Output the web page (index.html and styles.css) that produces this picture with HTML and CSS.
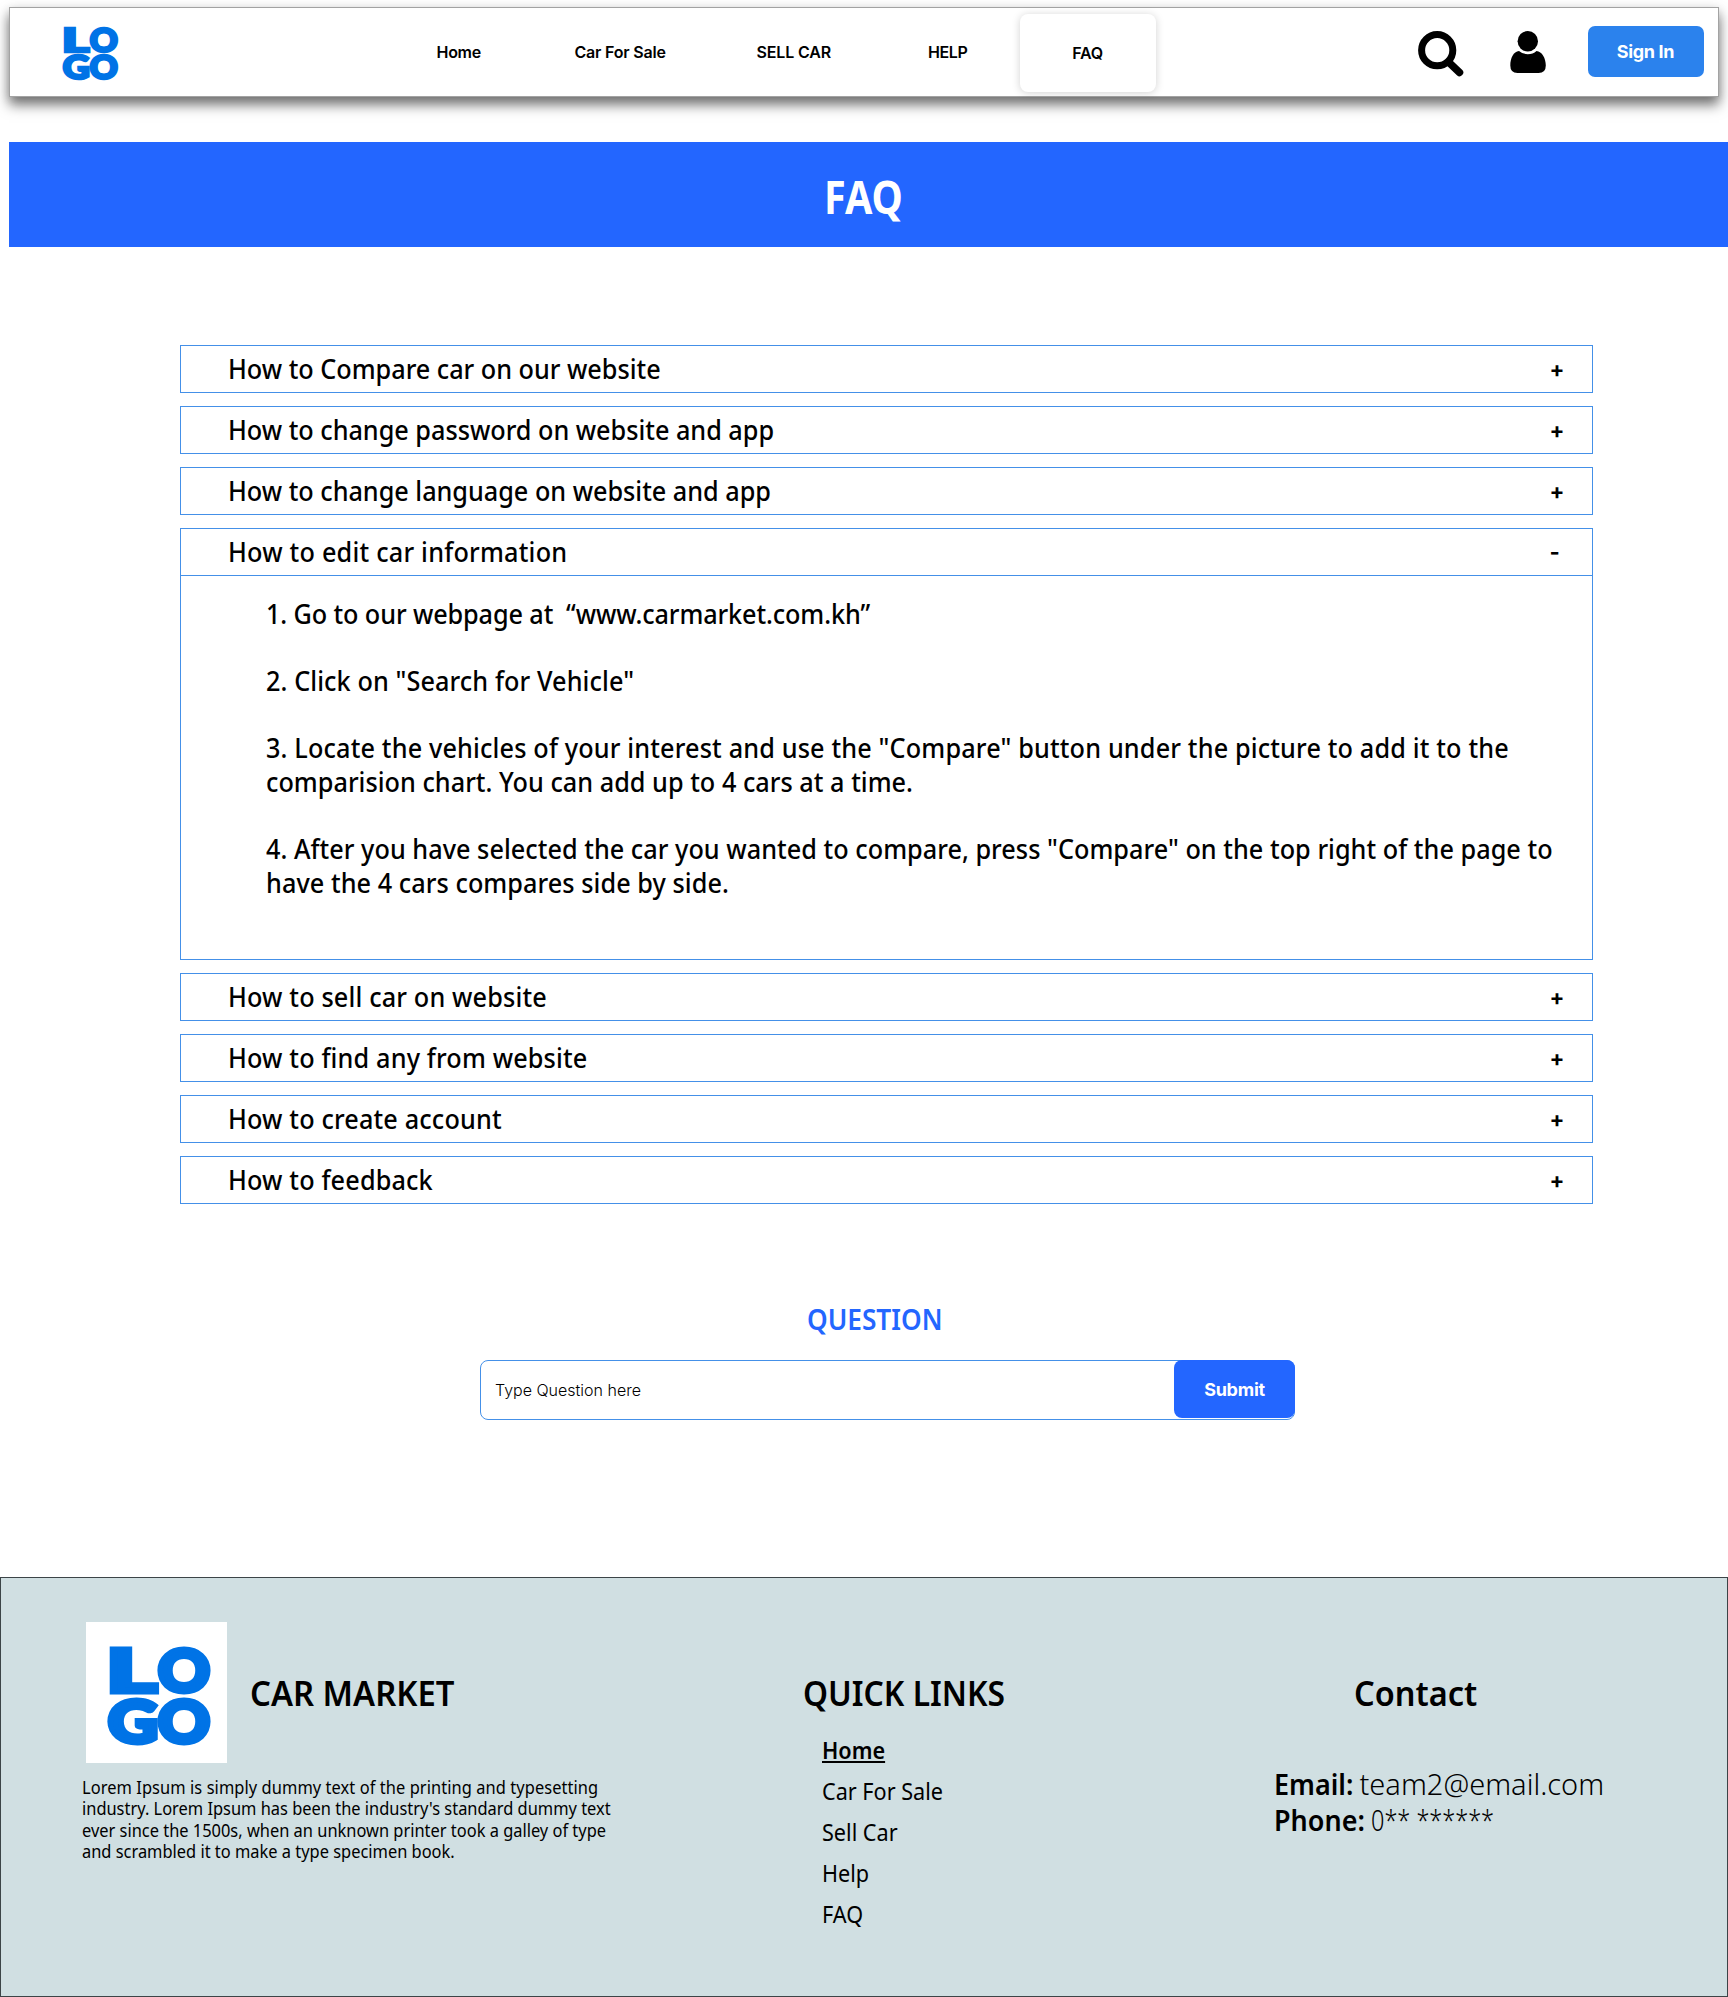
FILE: index.html
```
<!DOCTYPE html>
<html lang="en">
<head>
<meta charset="utf-8">
<title>Car Market - FAQ</title>
<link rel="stylesheet" href="styles.css">
</head>
<body>
<header class="topbar">
  <svg class="topbar-logo" viewBox="0 0 141 141" role="img" aria-label="Logo">
    <g class="logo-letters">
      <text x="20.500" y="70" textLength="50" lengthAdjust="spacingAndGlyphs">L</text>
      <text x="72" y="70" textLength="52" lengthAdjust="spacingAndGlyphs">O</text>
      <text x="22" y="121" textLength="50" lengthAdjust="spacingAndGlyphs">G</text>
      <text x="72" y="121" textLength="52" lengthAdjust="spacingAndGlyphs">O</text>
    </g>
  </svg>
  <nav class="nav">
    <a class="nav-link nav-home">Home</a>
    <a class="nav-link nav-sale">Car For Sale</a>
    <a class="nav-link nav-sell">SELL CAR</a>
    <a class="nav-link nav-help">HELP</a>
    <a class="nav-link nav-active">FAQ</a>
  </nav>
  <div class="actions">
    <svg class="icon-search" viewBox="0 0 46 46"><circle cx="19.2" cy="19.2" r="15.6" fill="none" stroke="#000" stroke-width="7"/><path d="M31 31.5L41.5 41.5" stroke="#000" stroke-width="7.5" stroke-linecap="round"/></svg>
    <svg class="icon-user" viewBox="0 0 36 42"><circle cx="17.8" cy="10.2" r="10.2"/><path d="M9 20Q12.500 23.200 17.800 23.200Q23 23.200 26.500 20C32 20.500 35.800 27 35.800 34.500Q35.800 42 28.500 42H7.500Q.3 42 .3 34.500C.3 27 3.500 20.500 9 20Z"/></svg>
    <button class="signin">Sign In</button>
  </div>
</header>

<h1 class="banner"><span>FAQ</span></h1>

<main>
  <section class="faq">
    <article class="item"><h2>How to Compare car on our website</h2><span class="sign">+</span></article>
    <article class="item"><h2>How to change password on website and app</h2><span class="sign">+</span></article>
    <article class="item"><h2>How to change language on website and app</h2><span class="sign">+</span></article>
    <div class="open">
      <article class="item"><h2>How to edit car information</h2><span class="sign minus">-</span></article>
      <div class="answer">
        <p><span class="l1">1. Go to our webpage at&nbsp; “www.carmarket.com.kh”</span></p>
        <p><span class="l2">2. Click on "Search for Vehicle"</span></p>
        <p><span class="l3">3. Locate the vehicles of your interest and use the "Compare" button under the picture to add it to the</span> <span class="l4">comparision chart. You can add up to 4 cars at a time.</span></p>
        <p><span class="l5">4. After you have selected the car you wanted to compare, press "Compare" on the top right of the page to</span> <span class="l6">have the 4 cars compares side by side.</span></p>
      </div>
    </div>
    <article class="item"><h2>How to sell car on website</h2><span class="sign">+</span></article>
    <article class="item"><h2>How to find any from website</h2><span class="sign">+</span></article>
    <article class="item"><h2>How to create account</h2><span class="sign">+</span></article>
    <article class="item"><h2>How to feedback</h2><span class="sign">+</span></article>
  </section>

  <section class="question">
    <h2 class="question-title">QUESTION</h2>
    <div class="ask">
      <span class="placeholder">Type Question here</span>
      <button class="submit">Submit</button>
    </div>
  </section>
</main>

<footer class="footer">
  <div class="about">
    <div class="brand">
      <svg class="brand-logo" viewBox="0 0 141 141" role="img" aria-label="Logo">
        <g class="logo-letters">
          <text x="20.500" y="70" textLength="50" lengthAdjust="spacingAndGlyphs">L</text>
          <text x="72" y="70" textLength="52" lengthAdjust="spacingAndGlyphs">O</text>
          <text x="22" y="121" textLength="50" lengthAdjust="spacingAndGlyphs">G</text>
          <text x="72" y="121" textLength="52" lengthAdjust="spacingAndGlyphs">O</text>
        </g>
      </svg>
      <h3 class="brand-name">CAR MARKET</h3>
    </div>
    <p class="blurb"><span class="b1">Lorem Ipsum is simply dummy text of the printing and typesetting</span> <span>industry. Lorem Ipsum has been the industry's standard dummy text</span> <span>ever since the 1500s, when an unknown printer took a galley of type</span> <span>and scrambled it to make a type specimen book.</span></p>
  </div>
  <div class="links">
    <h3 class="links-title">QUICK LINKS</h3>
    <ul>
      <li class="current">Home</li>
      <li>Car For Sale</li>
      <li>Sell Car</li>
      <li>Help</li>
      <li>FAQ</li>
    </ul>
  </div>
  <div class="contact">
    <h3 class="contact-title">Contact</h3>
    <p class="line"><b class="k-email">Email:</b><span class="v-email">team2@email.com</span></p>
    <p class="line"><b class="k-phone">Phone:</b><span class="v-phone">0** ******</span></p>
  </div>
</footer>
</body>
</html>
```
FILE: styles.css
```
* { box-sizing: border-box; }
body {
  margin: 0;
  background: #fff;
  color: #000;
  font-family: "Noto Sans", sans-serif;
}
h1, h2, h3, p, ul { margin: 0; padding: 0; }
li { list-style: none; }
button { border: 0; padding: 0; color: #fff; font-family: Inter, sans-serif; font-weight: 700; font-size: 18px; }

/* Slightly condensed type */
.banner span, .item h2, .answer span, .question-title, .footer h3,
.blurb, .links ul, .line b, .v-phone {
  transform-origin: left center;
}

/* Top bar */
.topbar {
  display: flex;
  height: 90px;
  margin: 7px 9px 0 9px;
  border: 1px solid #a3a3a3;
  background: #fff;
  box-shadow: 0 8px 12px rgba(0, 0, 0, .52), 0 2px 10px rgba(0, 0, 0, .12);
}
.topbar-logo { width: 76px; height: 76px; margin: 6px 0 0 41px; }
.logo-letters {
  font-family: Lato, sans-serif;
  font-weight: 900;
  font-size: 59px;
  fill: #0073e6;
  stroke: #0073e6;
  stroke-width: 5;
}
.nav { display: flex; margin-left: 309.5px; font-family: Inter, sans-serif; font-size: 16px; font-weight: 600; }
.nav-link { line-height: 88px; height: 88px; white-space: nowrap; }
.nav-home { width: 138px; letter-spacing: -.3px; }
.nav-sale { width: 182px; letter-spacing: -.2px; }
.nav-sell { width: 171.5px; letter-spacing: -.15px; }
.nav-help { width: 91.5px; letter-spacing: -.4px; }
.nav-active {
  width: 136px;
  height: 78px;
  margin-top: 6px;
  line-height: 78px;
  text-align: center;
  letter-spacing: -.2px;
  border-radius: 8px;
  background: #fff;
  box-shadow: 0 1px 8px rgba(0, 0, 0, .18);
}
.actions { display: flex; margin-left: 262px; }
.icon-search { width: 46px; height: 46px; margin: 23px 46px 0 0; }
.icon-user { width: 36px; height: 42px; margin: 23px 42px 0 0; }
.signin {
  width: 116px;
  height: 51px;
  margin-top: 18px;
  border-radius: 7px;
  background: #2b82ed;
  letter-spacing: -.33px;
}

/* Banner */
.banner {
  height: 105px;
  margin: 45px 0 0 9px;
  padding-left: 815px;
  background: #2366ff;
  color: #fff;
  font-size: 46px;
  font-weight: 700;
  line-height: 108px;
}
.banner span { display: inline-block; transform: scaleX(.86); }

/* Accordion */
.faq { display: flex; flex-direction: column; gap: 13px; width: 1413px; margin: 98px 0 0 180px; }
.item {
  display: flex;
  height: 48px;
  border: 1px solid #4490e8;
  padding-left: 46.5px;
}
.item h2 {
  width: 1322px;
  font-size: 27px;
  font-weight: 500;
  line-height: 45.5px;
  letter-spacing: .16px;
  white-space: nowrap;
  transform: scaleX(.935);
}
.item:nth-child(-n+3) h2 { letter-spacing: -.02px; }
.open .item:first-child h2 { letter-spacing: .23px; }
.sign { font: 700 22px/46px Inter, sans-serif; }
.open { height: 432px; border: 1px solid #4490e8; }
.open .item { border-width: 0 0 1px; height: 47px; }
.answer { padding: 20.8px 0 0 85px; font-size: 27px; font-weight: 500; line-height: 33.6px; }
.answer p { margin-bottom: 33.6px; }
.answer span { display: block; white-space: nowrap; transform: scaleX(.935); }
.l1 { letter-spacing: -.12px; }
.l2 { letter-spacing: .1px; }
.l3 { letter-spacing: .16px; }
.l4 { letter-spacing: .02px; }
.l5 { letter-spacing: .03px; }
.l6 { letter-spacing: .06px; }

/* Question form */
.question-title {
  margin: 95px 0 0 807px;
  color: #2366ff;
  font-size: 29px;
  font-weight: 600;
  line-height: 40px;
  transform: scaleX(.905);
}
.ask {
  display: flex;
  justify-content: space-between;
  width: 815px;
  height: 60px;
  margin: 21px 0 0 480px;
  border: 1px solid #4490e8;
  border-radius: 8px;
}
.placeholder { margin-left: 14px; font: 300 16px/59px Inter, sans-serif; }
.submit { width: 121px; height: 58px; margin: -1px -1px 0 0; border-radius: 8px; background: #2366ff; letter-spacing: -.25px; }

/* Footer */
.footer {
  display: grid;
  grid-template-columns: 720px 472px 1fr;
  height: 420px;
  margin-top: 157px;
  padding-left: 81px;
  border: 1px solid #3c4447;
  background: #d0dfe2;
}
.brand { display: flex; padding: 44px 0 0 4px; }
.brand-logo { width: 141px; height: 141px; background: #fff; }
.footer h3 { font-size: 34px; font-weight: 600; line-height: 40px; white-space: nowrap; }
.footer .brand-name { margin: 51px 0 0 23px; transform: scaleX(.965); }
.blurb { margin-top: 13.5px; font-size: 17.5px; line-height: 21.6px; transform: scaleX(.938); }
.blurb span { display: block; white-space: nowrap; }
.blurb .b1 { letter-spacing: .08px; }
.links, .contact { padding-top: 95px; }
.footer .links-title { margin-left: 1px; transform: scaleX(.935); }
.links ul { margin: 17px 0 0 20px; font-size: 23px; line-height: 41px; transform: scaleX(.94); }
.links .current { font-weight: 600; text-decoration: underline; text-decoration-thickness: 2px; text-underline-offset: 2px; }
.footer .contact-title { margin: 0 0 53px 80px; transform: scaleX(.955); }
.line { display: flex; font-size: 29px; line-height: 36px; font-weight: 300; white-space: nowrap; }
.line b { font-weight: 600; transform: scaleX(.93); }
.k-email { width: 85.5px; }
.k-phone { width: 96.5px; }
.v-phone { transform: scaleX(.81); }
```
